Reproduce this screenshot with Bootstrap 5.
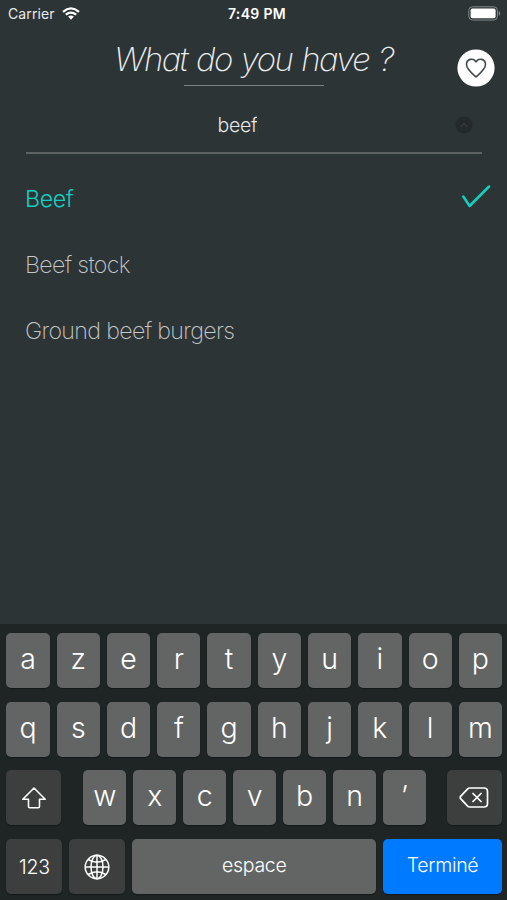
<!DOCTYPE html>
<html lang="en">
<head>
<meta charset="utf-8">
<meta name="viewport" content="width=device-width, initial-scale=1">
<title>What do you have ?</title>
<link href="https://cdn.jsdelivr.net/npm/bootstrap@5.3.0/dist/css/bootstrap.min.css" rel="stylesheet">
<style>
body { background: #2d3436; font-family: Inter, "Liberation Sans", sans-serif; color: #fff; height: 900px; overflow: hidden; }
svg { display: block; flex: none; }
.status { height: 28px; padding: 0 6px 0 8px; font-size: 14px; line-height: 28px; }
.status .carrier { color: #e9ebeb; letter-spacing: .1px; }
.status .wifi { margin-left: 7px; margin-bottom: 2px; }
.status .battery { margin-bottom: 1px; }
.status .clock { font-weight: 600; font-size: 14px; letter-spacing: .35px; padding-left: 5px; }
.status .side { flex: 1 1 0; }
.heading { height: 58px; }
.heading h1 { font-size: 33px; font-weight: 200; font-style: italic; line-height: 40px; letter-spacing: -1.6px; word-spacing: 1.4px; margin: 11px 0 0; color: #eceeee; white-space: nowrap; }
.rule { width: 140px; height: 1px; background: #7c8081; margin: 6px auto 0; }
.fav { top: 49px; right: 12px; width: 38px; height: 38px; }
.search { height: 68px; margin: 0 25px 0 26px; border-bottom: 2px solid #5d6162; }
.search .query { font-size: 19.5px; font-weight: 300; line-height: 24px; letter-spacing: -.3px; padding: 27px 32px 0 0; color: #e6e8e8; }
.search .caret { width: 1px; height: 18px; background: #30365a; }
.clear { right: 9px; top: 30px; }
.results { margin-top: 12px; }
.results .list-group-item { height: 66px; padding: 0 16px 0 25px; background: transparent; color: #c6c9c9; font-size: 23.2px; font-weight: 200; letter-spacing: -.65px; }
.results .chosen { color: #12cfc0; font-weight: 300; letter-spacing: -.4px; }
.results .chosen svg { margin-bottom: 5px; }
.keyboard { height: 276px; background: #1f2424; padding: 9.4px 5px 0 6.4px; }
.krow { height: 55px; margin-bottom: 13.5px; gap: 7px; }
.key { background: #636565; border: 0; border-radius: 5px; color: #fff; box-shadow: 0 1px 1px #151919; flex: 1 1 0; min-width: 0; padding: 0 0 3px; font-size: 28.5px; font-weight: 300; line-height: 1; display: flex; align-items: center; justify-content: center; }
.key.dark { background: #3d3f3f; padding: 1px 0 0; }
.key.word { font-size: 19.5px; font-weight: 350; letter-spacing: -.3px; padding-bottom: 1px; }
.key.word.dark { padding: 2px 0 0; }
.key.done { background: #007aff; }
.w-shift { flex: 0 0 55px; }
.shift-key { margin-right: 15px; }
.delete-key { margin-left: 14px; }
.w-num { flex: 0 0 56px; }
.w-done { flex: 0 0 119px; }
</style>
</head>
<body class="d-flex flex-column position-relative">
<div class="status d-flex align-items-center">
  <div class="side d-flex align-items-center"><span class="carrier">Carrier</span>
    <svg class="wifi" width="18" height="13" viewBox="0 0 18 13" fill="none" stroke="#fff" stroke-width="2.2"><path d="M1 4.800Q9-2 17 4.800M3.800 7.700Q9 3.400 14.200 7.700"/><path d="M6.100 9.600Q9 7.200 11.900 9.600L9 12.700Z" fill="#fff" stroke="none"/></svg>
  </div>
  <div class="clock">7:49 PM</div>
  <div class="side d-flex justify-content-end">
    <svg class="battery" width="33" height="15" viewBox="0 0 33 15"><rect x=".8" y=".8" width="28.6" height="13.2" rx="3.6" fill="none" stroke="#84898a"/><rect x="2.6" y="2.6" width="25" height="9.6" rx="1.8" fill="#fff"/><path d="M30.8 5v4.800q1.400-.6 1.400-2.400T30.800 5Z" fill="#84898a"/></svg>
  </div>
</div>
<header class="heading text-center"><h1>What do you have ?</h1><div class="rule"></div></header>
<a class="fav position-absolute" href="#" aria-label="Favourites">
  <svg width="38" height="38" viewBox="0 0 38 38"><circle cx="19" cy="19" r="18.600" fill="#fff"/><path d="M19 28C16 25.200 9.500 20.300 9.500 15.600c0-5.800 7-7.200 9.500-2.700 2.500-4.500 9.500-3.100 9.500 2.700C28.500 20.300 22 25.200 19 28Z" fill="none" stroke="#444a4b" stroke-width="1.600" stroke-linejoin="round"/></svg>
</a>
<div class="search position-relative">
  <div class="query d-flex justify-content-center align-items-center"><span>beef</span><span class="caret"></span></div>
  <svg class="clear position-absolute" width="18" height="18" viewBox="0 0 18 18"><circle cx="9" cy="9" r="8.500" fill="#24292b"/><path d="M5.500 11 9 7.500l3.500 3.500" fill="none" stroke="#343a3c" stroke-width="1.200"/></svg>
</div>
<ul class="results list-group list-group-flush">
  <li class="list-group-item border-0 chosen d-flex align-items-center justify-content-between">Beef
    <svg width="30" height="24" viewBox="0 0 30 24" fill="none" stroke="#12cfc0" stroke-width="2.500" stroke-linecap="round" stroke-linejoin="round"><path d="M2.300 11.500 8.600 21 28 1.500"/></svg></li>
  <li class="list-group-item border-0 d-flex align-items-center">Beef stock</li>
  <li class="list-group-item border-0 d-flex align-items-center">Ground beef burgers</li>
</ul>
<div class="keyboard mt-auto">
  <div class="krow d-flex"><button class="key">a</button><button class="key">z</button><button class="key">e</button><button class="key">r</button><button class="key">t</button><button class="key">y</button><button class="key">u</button><button class="key">i</button><button class="key">o</button><button class="key">p</button></div>
  <div class="krow d-flex"><button class="key">q</button><button class="key">s</button><button class="key">d</button><button class="key">f</button><button class="key">g</button><button class="key">h</button><button class="key">j</button><button class="key">k</button><button class="key">l</button><button class="key">m</button></div>
  <div class="krow d-flex">
    <button class="key dark w-shift shift-key" aria-label="Shift"><svg width="26" height="24" viewBox="0 0 26 24" fill="none" stroke="#fff" stroke-width="1.600" stroke-linejoin="round"><path d="M13 2 1.800 13.200H7.500V20.500q0 1.300 1.300 1.300h8.400q1.300 0 1.300-1.300V13.200h5.700Z"/></svg></button>
    <button class="key">w</button><button class="key">x</button><button class="key">c</button><button class="key">v</button><button class="key">b</button><button class="key">n</button><button class="key">’</button>
    <button class="key dark w-shift delete-key" aria-label="Delete"><svg width="30" height="24" viewBox="0 0 30 24" fill="none" stroke="#fff" stroke-width="1.700" stroke-linejoin="round" stroke-linecap="round"><path d="M10.500 2H25q3.500 0 3.500 3.500v12Q28.500 21 25 21H10.500q-1 0-1.800-.8L1.800 12.800q-1.200-1.300 0-2.600L8.700 2.800Q9.500 2 10.500 2ZM14 7.500l8 8m0-8-8 8"/></svg></button>
  </div>
  <div class="krow d-flex">
    <button class="key dark word w-num">123</button>
    <button class="key dark w-num" aria-label="Keyboard language"><svg width="26" height="26" viewBox="0 0 26 26" fill="none" stroke="#fff" stroke-width="1.500"><circle cx="13" cy="13" r="11.800"/><ellipse cx="13" cy="13" rx="6" ry="11.800"/><path d="M13 1.200v23.600M1.200 13h23.600M4.200 5.500Q13 11 21.800 5.500M4.200 20.500Q13 15 21.800 20.500"/></svg></button>
    <button class="key word">espace</button>
    <button class="key word done w-done">Terminé</button>
  </div>
</div>
<script src="https://cdn.jsdelivr.net/npm/bootstrap@5.3.0/dist/js/bootstrap.bundle.min.js"></script>
</body>
</html>
